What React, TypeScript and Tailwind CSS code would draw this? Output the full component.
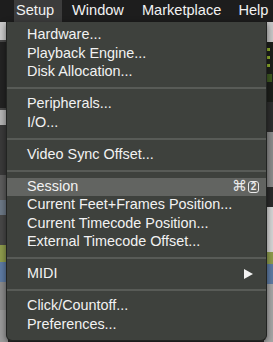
import React from 'react';

const menuBar = ['Setup', 'Window', 'Marketplace', 'Help'];

type Entry = { label?: string; sep?: boolean; shortcut?: boolean; sub?: boolean; active?: boolean };

const entries: Entry[] = [
  { label: 'Hardware...' },
  { label: 'Playback Engine...' },
  { label: 'Disk Allocation...' },
  { sep: true },
  { label: 'Peripherals...' },
  { label: 'I/O...' },
  { sep: true },
  { label: 'Video Sync Offset...' },
  { sep: true },
  { label: 'Session', shortcut: true, active: true },
  { label: 'Current Feet+Frames Position...' },
  { label: 'Current Timecode Position...' },
  { label: 'External Timecode Offset...' },
  { sep: true },
  { label: 'MIDI', sub: true },
  { sep: true },
  { label: 'Click/Countoff...' },
  { label: 'Preferences...' },
];

// the app window behind the menu, only the edges show
const Backdrop = () => (
  <div className="flex h-[320px] justify-between">
    <div className="flex w-[8px] flex-col">
      <div className="h-[18px] bg-[#c9c9c9]" />
      <div className="h-[70px] border-y-2 border-[#4a4a4a] bg-[#232323]" />
      <div className="h-[15px] bg-[#b4b4b4]" />
      <div className="h-[50px] bg-[#3a3a3a]" />
      <div className="h-[25px] bg-[#5c5c5c]" />
      <div className="h-[15px] bg-[#6c7886]" />
      <div className="h-[30px] bg-[#474747]" />
      <div className="h-[17px] bg-[#8d9b4c]" />
      <div className="h-[20px] bg-[#5d7aa2]" />
      <div className="h-[28px] bg-[#8a8a8a]" />
      <div className="flex-1 bg-[#9a9a9a]" />
    </div>
    <div className="flex w-[9px] flex-col">
      <div className="h-[20px] bg-[#c4c4c4]" />
      <div className="flex h-[60px] flex-col gap-[5px] bg-[#1d1f1b] pl-[2px] pt-[6px]">
        <div className="h-[3px] w-[4px] bg-[#8fae2c]" />
        <div className="h-[3px] w-[4px] bg-[#8fae2c]" />
        <div className="h-[3px] w-[4px] bg-[#8fae2c]" />
        <div className="mt-[2px] h-[8px] w-[6px] bg-[#3f5a22]" />
      </div>
      <div className="h-[30px] bg-[#2e2e2e]" />
      <div className="h-[55px] bg-[#8a8a8a]" />
      <div className="h-[20px] bg-[#2a2a2a]" />
      <div className="h-[45px] bg-[#d4d4d4]" />
      <div className="h-[12px] bg-[#8d9b4c]" />
      <div className="h-[20px] bg-[#5d7aa2]" />
      <div className="flex-1 bg-[#a5a5a5]" />
    </div>
  </div>
);

export default function App() {
  return (
    <div className="relative h-[342px] w-[273px] overflow-hidden bg-[#2b2b2b] font-['Liberation_Sans',Arial,sans-serif] text-[14.4px] text-[#f2f2f2]">
      <div className="flex h-[22px] items-center bg-[#1d1d1d] pl-[14px] text-[14.6px]">
        {menuBar.map((m, i) => (
          <div
            key={m}
            className={`flex h-full items-center px-[2px] ${i === 0 ? 'w-[48px] bg-[#3c3c3c]' : ''} ${i === 1 ? 'ml-[8px]' : ''} ${i === 2 ? 'ml-[14px]' : ''} ${i === 3 ? 'ml-[13px]' : ''}`}
          >
            {m}
          </div>
        ))}
      </div>
      <Backdrop />

      {/* dropdown */}
      <div className="absolute left-[6px] top-[22px] w-[261px] rounded-b-[6px] border border-t-0 border-[#222422] bg-[#3e413d] pb-[6px] pt-[4px] shadow-[0_2px_6px_rgba(0,0,0,0.5)]">
        {entries.map((e, i) =>
          e.sep ? (
            <div key={i} className="flex h-[13.5px] items-center">
              <div className="h-[2px] w-full bg-[#585b57]" />
            </div>
          ) : (
            <div
              key={i}
              className={`flex h-[18.5px] items-center justify-between pl-[20px] pr-[7px] ${e.active ? 'bg-[#626461]' : ''}`}
            >
              <span>{e.label}</span>
              {e.shortcut && (
                <span className="flex items-center gap-[1px] text-[#eaeaea]">
                  <span className="font-['DejaVu_Sans'] text-[15px] leading-none">⌘</span>
                  <span className="flex h-[12px] w-[11px] items-center justify-center rounded-[3px] border border-[#eaeaea] text-[10px] font-bold leading-none">
                    2
                  </span>
                </span>
              )}
              {e.sub && (
                <svg width="9" height="10" viewBox="0 0 9 10" className="mr-[6px]">
                  <path d="M0 0 L9 5 L0 10 Z" fill="#f2f2f2" />
                </svg>
              )}
            </div>
          )
        )}
      </div>
    </div>
  );
}
